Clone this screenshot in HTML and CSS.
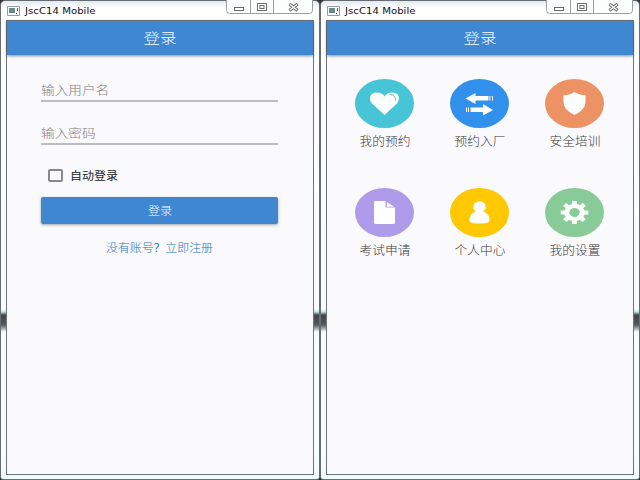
FILE: index.html
```
<!DOCTYPE html>
<html lang="zh-CN">
<head>
<meta charset="utf-8">
<title>JscC14 Mobile</title>
<link rel="stylesheet" href="styles.css">
</head>
<body>
<main class="desktop">
  <section class="window">
    <header class="titlebar">
      <svg class="app-icon" width="13" height="10" viewBox="0 0 13 10"><path fill="#fafafa" stroke="#999" d="M.5.5h12v9H.5z"/><path fill="#6b8790" d="M2 2h6v5H2z"/><path fill="#555" d="M10 2h1v3h-1zM9 7h1v1H9z"/></svg>
      <h1 class="caption">JscC14 Mobile</h1>
      <svg class="controls" width="88" height="14" viewBox="0 0 88 14"><path fill="#fcfdfd" stroke="#9a9fa4" d="M.5 0v10.500q0 3 3 3h80q3 0 3-3V0M24.500 0v13M47.500 0v13"/><g fill="#fff" stroke="#666a70"><rect x="8.500" y="7.500" width="9" height="3"/><rect x="31.500" y="3.500" width="9" height="7"/><rect x="34" y="5.500" width="4" height="3"/></g><path fill="none" stroke="#666a70" stroke-width="3.200" d="M63.500 4l8 6.500M71.500 4l-8 6.500"/><path fill="none" stroke="#fff" stroke-width="1.400" d="M64 4.500l7 5.500M71 4.500l-7 5.500"/></svg>
    </header>
    <div class="client">
      <div class="appbar"><span>登录</span></div>
      <form class="login">
        <label class="field"><span>输入用户名</span></label>
        <label class="field field-password"><span>输入密码</span></label>
        <label class="remember"><i class="checkbox"></i><span>自动登录</span></label>
        <button class="submit" type="button"><span>登录</span></button>
        <a class="register"><span>没有账号<b>？</b>立即注册</span></a>
      </form>
    </div>
  </section>
  <section class="window">
    <header class="titlebar">
      <svg class="app-icon" width="13" height="10" viewBox="0 0 13 10"><path fill="#fafafa" stroke="#999" d="M.5.5h12v9H.5z"/><path fill="#6b8790" d="M2 2h6v5H2z"/><path fill="#555" d="M10 2h1v3h-1zM9 7h1v1H9z"/></svg>
      <h1 class="caption">JscC14 Mobile</h1>
      <svg class="controls" width="88" height="14" viewBox="0 0 88 14"><path fill="#fcfdfd" stroke="#9a9fa4" d="M.5 0v10.500q0 3 3 3h80q3 0 3-3V0M24.500 0v13M47.500 0v13"/><g fill="#fff" stroke="#666a70"><rect x="8.500" y="7.500" width="9" height="3"/><rect x="31.500" y="3.500" width="9" height="7"/><rect x="34" y="5.500" width="4" height="3"/></g><path fill="none" stroke="#666a70" stroke-width="3.200" d="M63.500 4l8 6.500M71.500 4l-8 6.500"/><path fill="none" stroke="#fff" stroke-width="1.400" d="M64 4.500l7 5.500M71 4.500l-7 5.500"/></svg>
    </header>
    <div class="client">
      <div class="appbar"><span>登录</span></div>
      <nav class="menu">
        <a class="item"><svg width="59" height="49" viewBox="0 0 59 49"><ellipse cx="29.500" cy="24.500" rx="29.500" ry="24.500" fill="#47c4d5"/><path fill="#fff" d="M29.500 36L17 24.500C12.500 19 16 13.500 21.500 13.500c4 0 6.500 1.500 8 4 1.500-2.500 4-4 8-4 6 0 8.500 5.500 4.500 11z"/><path fill="none" stroke="#47c4d5" stroke-width="1" d="M34.500 15.500c4 0 6 2 6 6"/></svg><span>我的预约</span></a>
        <a class="item"><svg width="59" height="49" viewBox="0 0 59 49"><ellipse cx="29.500" cy="24.500" rx="29.500" ry="24.500" fill="#3090eb"/><path fill="#fff" d="M15.500 19.500l10-5.500v3h13v4.500h-13V25zM39.500 17h1v4.500h-1zM42 17h1v4.500h-1zM43 31l-10-6v3.500H20.500V33H33v3.500zM16 28.500h1V33h-1zM18 28.500h1V33h-1z"/></svg><span>预约入厂</span></a>
        <a class="item"><svg width="59" height="49" viewBox="0 0 59 49"><ellipse cx="29.500" cy="24.500" rx="29.500" ry="24.500" fill="#ed9265"/><path fill="#fff" d="M29.500 13q4 3 11 3.200v6.300q0 8.500-11 13.500-11-5-11-13.500v-6.300q7-.2 11-3.200z"/></svg><span>安全培训</span></a>
        <a class="item"><svg width="59" height="49" viewBox="0 0 59 49"><ellipse cx="29.500" cy="24.500" rx="29.500" ry="24.500" fill="#ae9bea"/><path fill="#fff" d="M20 13h10.500v6.500H40v15q0 1.500-1.500 1.500h-18q-1.500 0-1.500-1.500V14q0-1 1-1zM31.800 14l7.200 4.700h-7.200z"/></svg><span>考试申请</span></a>
        <a class="item"><svg width="59" height="49" viewBox="0 0 59 49"><ellipse cx="29.500" cy="24.500" rx="29.500" ry="24.500" fill="#ffc800"/><path fill="#fff" d="M29.500 13.500c4 0 6 2.200 6 5.300 1 1.500-.2 2.700-1 3-.2.700-.7 1.200-1 1.700 4 1.500 6 4.500 6 8 0 3-1.500 4-10 4s-10-1-10-4c0-3.500 2-6.500 6-8-.3-.5-.8-1-1-1.700-.8-.3-2-1.500-1-3 0-3.100 2-5.300 6-5.300z"/></svg><span>个人中心</span></a>
        <a class="item"><svg width="59" height="49" viewBox="0 0 59 49"><ellipse cx="29.500" cy="24.500" rx="29.500" ry="24.500" fill="#88cb98"/><g transform="matrix(1.200 0 0 1 29.500 24.500)"><g fill="#fff"><path d="M-2-11.500h4v23h-4z"/><path d="M-2-11.500h4v23h-4z" transform="rotate(45)"/><path d="M-2-11.500h4v23h-4z" transform="rotate(90)"/><path d="M-2-11.500h4v23h-4z" transform="rotate(135)"/></g><circle r="6.400" fill="#88cb98" stroke="#fff" stroke-width="4.500"/><circle r="4.200" fill="#88cb98"/></g></svg><span>我的设置</span></a>
      </nav>
    </div>
  </section>
</main>
</body>
</html>
```
FILE: styles.css
```
* { box-sizing: border-box; }
body { margin: 0; font-family: "Noto Sans CJK SC", sans-serif; font-weight: 300; background: #333; }
.desktop { display: grid; grid-template-columns: 320px 320px; height: 480px; }
.window {
  display: flex; flex-direction: column; height: 480px;
  padding: 0 5px 4px; border: 1px solid #686d72; border-radius: 5px 5px 3px 3px;
  background:
    linear-gradient(transparent 308px, #c5dfe5 311px, #40444b 314px, #55585f 324px, transparent 331px),
    linear-gradient(#e0eaf2, #fff 7px, #fbfeff 440px, #f0fbfc);
}
.titlebar { display: flex; align-items: flex-start; height: 19px; padding-left: 1px; }
.app-icon { margin: 5px 5px 0 0; }
.caption {
  margin: 2px 0 0; width: 150px; white-space: nowrap;
  font: 400 9.500px/15px "DejaVu Sans", sans-serif; color: #111;
  transform: scaleX(1.070); transform-origin: left;
}
.controls { margin: -1px 0 0 auto; }
.client { flex: 1; border: 1px solid #6b737a; background: #faf9fc; }
.appbar {
  display: flex; align-items: center; justify-content: center; height: 34px;
  background: #4087d2; color: #f4faff; font-size: 14px; line-height: 18px; padding-bottom: 2px;
  box-shadow: 0 1px 3px rgba(0, 0, 0, .45);
}
.appbar span { transform: scaleX(1.180); }
.login { display: flex; flex-direction: column; margin: 0 35px 0 34px; padding-top: 22px; }
.field {
  display: flex; align-items: flex-end; height: 25px;
  border-bottom: 2px solid #bdbcc0; color: #828186; font-size: 12.500px; line-height: 21px;
}
.field span { transform: scaleX(1.090); transform-origin: left; }
.field-password { margin-top: 18px; }
.remember {
  display: flex; align-items: center; height: 20px; margin: 20px 0 0 7px;
  color: #222; font-size: 11.500px; font-weight: 400; line-height: 18px;
}
.checkbox { width: 15px; height: 13px; margin-right: 7px; border: 2px solid #88878b; border-radius: 2px; }
.remember span { transform: scaleX(1.040); transform-origin: left; }
.submit {
  height: 27px; margin-top: 12px; padding: 0; border: 0; border-radius: 2px;
  background: #4087d2; color: #f4faff; font: 300 11px/27px "Noto Sans CJK SC", sans-serif;
  box-shadow: 0 1px 3px rgba(0, 0, 0, .35);
}
.submit span { display: inline-block; transform: scaleX(1.100); }
.register { margin-top: 13px; text-align: center; color: #2475c2; font-size: 11px; line-height: 20px; }
.register span { display: inline-block; transform: scaleX(1.080); }
.menu { display: grid; grid-template-columns: repeat(3, 95px); grid-auto-rows: 109px; padding: 24px 0 0 10px; }
.item { display: flex; flex-direction: column; align-items: center; color: #3a3a3a; font-size: 12px; line-height: 18px; }
.item svg { margin-bottom: 4px; }
.item span { transform: translateX(1px) scaleX(1.060); }
```
